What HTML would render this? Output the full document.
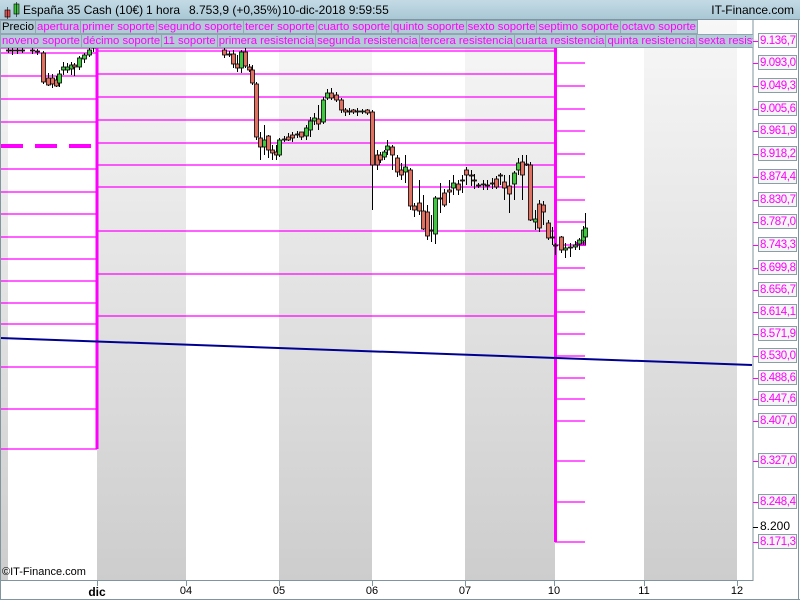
<!DOCTYPE html>
<html><head><meta charset="utf-8"><style>
body{margin:0;width:800px;height:600px;overflow:hidden;background:#fff;font-family:"Liberation Sans",sans-serif;position:relative}
#hdr{position:absolute;left:0;top:0;width:800px;height:20px;background:linear-gradient(#c4dbe5,#a9c7d5);border-bottom:1px solid #7f959f;box-sizing:border-box}
#hdr .t{position:absolute;top:3px;font-size:12px;line-height:14px;color:#000;white-space:pre}
#hdr .r{position:absolute;right:6px;top:3px;font-size:12px;line-height:14px}
.lg{position:absolute;height:14px;font-size:11.3px;line-height:14px;display:flex}
.lg span{background:#b3cbd6;border:1px solid #90a7b2;border-left:none;color:#ff00ff;padding:0 1px;white-space:nowrap;box-sizing:border-box;height:14px;line-height:12px}
.lg span:first-child{border-left:1px solid #90a7b2}
.ax{position:absolute;left:758px;width:39px;height:15px;border:1px solid #8a9ea8;background:#f5f5f5;color:#ff00ff;font-size:11.5px;letter-spacing:-0.4px;line-height:14px;box-sizing:border-box;padding-left:1px;overflow:hidden;white-space:nowrap}
.tk{position:absolute;left:753px;width:5px;height:1px;background:#ff00ff}
.dl{position:absolute;top:585px;font-size:11px;transform:translateX(-50%)}
</style></head><body>
<svg width="800" height="600" style="position:absolute;left:0;top:0">
<defs><linearGradient id="g" x1="0" y1="0" x2="0" y2="1"><stop offset="0" stop-color="#f7f7f7"/><stop offset="1" stop-color="#cdcdcd"/></linearGradient></defs>
<rect x="0" y="20" width="8" height="560" fill="url(#g)"/>
<rect x="97" y="20" width="89" height="560" fill="url(#g)"/>
<rect x="279" y="20" width="93" height="560" fill="url(#g)"/>
<rect x="465" y="20" width="90" height="560" fill="url(#g)"/>
<rect x="644" y="20" width="93" height="560" fill="url(#g)"/>
<g stroke="#ff00ff" stroke-width="1.2" fill="none" id="lines"></g>
<g id="cd"></g>
<line x1="0" y1="338" x2="752" y2="365" stroke="#000090" stroke-width="2"/>
<line x1="753" y1="20" x2="753" y2="581" stroke="#7f959f"/>
<line x1="0" y1="580.5" x2="753" y2="580.5" stroke="#7f959f"/>
<line x1="0.5" y1="20" x2="0.5" y2="600" stroke="#7f959f"/>
<line x1="798.5" y1="20" x2="798.5" y2="600" stroke="#7f959f"/>
<line x1="0" y1="599.5" x2="800" y2="599.5" stroke="#7f959f"/>
<g stroke="#7f959f" id="ticks"></g>
</svg>
<div id="hdr"><svg width="20" height="20" style="position:absolute;left:3px;top:1px"><rect x="2" y="9" width="5" height="7" fill="#e05050" stroke="#000" stroke-width=".6"/><line x1="4.5" y1="6" x2="4.5" y2="18" stroke="#000" stroke-width=".6"/><rect x="11" y="3" width="5" height="10" fill="#40c040" stroke="#000" stroke-width=".6"/><line x1="13.5" y1="1" x2="13.5" y2="16" stroke="#000" stroke-width=".6"/></svg><div class="t" style="left:23px">España 35 Cash (10€)</div><div class="t" style="left:146px">1 hora</div><div class="t" style="left:189px">8.753,9 (+0,35%)</div><div class="t" style="left:282px">10-dic-2018 9:59:55</div><div class="r">IT-Finance.com</div></div>
<div class="lg" style="left:0;top:20px"><span style="color:#000">Precio</span><span>apertura</span><span>primer soporte</span><span>segundo soporte</span><span>tercer soporte</span><span>cuarto soporte</span><span>quinto soporte</span><span>sexto soporte</span><span>septimo soporte</span><span>octavo soporte</span></div>
<div class="lg" style="left:0;top:34px;width:753px;overflow:hidden"><span>noveno soporte</span><span>décimo soporte</span><span>11 soporte</span><span>primera resistencia</span><span>segunda resistencia</span><span>tercera resistencia</span><span>cuarta resistencia</span><span>quinta resistencia</span><span>sexta resistencia</span></div>
<div style="position:absolute;left:2px;top:566px;font-size:11px">©IT-Finance.com</div>
<div class="dl" style="left:97px;font-weight:bold;font-size:12px">dic</div>
<div class="dl" style="left:186px">04</div><div class="dl" style="left:279px">05</div><div class="dl" style="left:372px">06</div><div class="dl" style="left:465px">07</div><div class="dl" style="left:554px">10</div><div class="dl" style="left:644px">11</div><div class="dl" style="left:737px">12</div>
<div style="position:absolute;left:760px;top:519px;font-size:12px">8.200</div><div class="tk" style="top:527px;background:#000"></div>
<div id="axl"></div>
<script>
var NS="http://www.w3.org/2000/svg";
function el(p,t,a){var e=document.createElementNS(NS,t);for(var k in a)e.setAttribute(k,a[k]);p.appendChild(e);return e;}
var L=document.getElementById('lines');
[53,76,99,122,169,192,214,237,259,281,303,324,367,409,449].forEach(function(y){el(L,'line',{x1:0,x2:97,y1:y,y2:y});});
el(L,'line',{x1:1,x2:92,y1:146,y2:146,'stroke-width':4,'stroke-dasharray':'22 12'});
[51,74,97,120,143,165,187,231,274,316].forEach(function(y){el(L,'line',{x1:97,x2:555,y1:y,y2:y});});
el(L,'line',{x1:0,x2:555,y1:48,y2:48});
var ax=[[41,"9.136,7"],[63,"9.093,0"],[86,"9.049,3"],[109,"9.005,6"],[131,"8.961,9"],[154,"8.918,2"],[177,"8.874,4"],[200,"8.830,7"],[222,"8.787,0"],[245,"8.743,3"],[268,"8.699,8"],[290,"8.656,7"],[312,"8.614,1"],[334,"8.571,9"],[356,"8.530,0"],[378,"8.488,6"],[399,"8.447,6"],[421,"8.407,0"],[461,"8.327,0"],[502,"8.248,4"],[542,"8.171,3"]];
var h="";ax.forEach(function(a){if(a[0]>48)el(L,'line',{x1:555,x2:585,y1:a[0],y2:a[0]});h+='<div class="tk" style="top:'+a[0]+'px"></div><div class="ax" style="top:'+(a[0]-8)+'px">'+a[1]+'</div>';});
document.getElementById('axl').innerHTML=h;
el(L,'line',{x1:97,x2:97,y1:48,y2:449,'stroke-width':3});
el(L,'line',{x1:555.5,x2:555.5,y1:48,y2:542,'stroke-width':3});
el(L,'line',{x1:576,x2:586,y1:244,y2:244,'stroke-width':4});
var C=document.getElementById('cd');
var d=[[8,50,51,47,53],[12,50,51,48,55],[17,50,51,47,54],[22,51,50,48,53],[32,50,51,48,54],[37,51,52,49,55],[43,53,82,51,84],[48,78,85,73,86],[52,78,84,74,88],[56,80,86,76,87],[59,83,74,70,87],[63,70,67,62,75],[67,70,67,63,73],[71,69,65,62,75],[74,65,67,63,76],[79,67,58,56,70],[84,59,55,53,63],[89,55,50,48,57],[93,48,46,44,52],
[224,50,55,47,58],[229,54,55,51,57],[233,54,64,50,68],[237,64,68,55,72],[241,68,52,50,73],[245,52,66,48,68],[249,67,70,64,72],[252,70,83,65,85],[256,84,137,82,140],[260,138,147,132,160],[264,147,140,125,155],[268,136,150,135,158],[272,150,153,145,160],[276,152,155,145,160],[279,155,140,138,157],[284,139,139,136,142],[288,137,140,133,141],[292,135,138,132,142],[297,134,134,131,138],[301,132,137,132,140],[306,136,128,125,140],[310,130,121,117,137],[314,121,118,113,125],[318,119,124,105,130],[323,122,100,97,124],[327,98,93,89,100],[331,93,98,88,100],[336,95,100,92,102],[341,100,110,98,113],[345,110,112,108,116],[349,111,112,108,115],[353,110,112,109,114],[357,111,112,108,116],[362,112,111,109,114],[367,110,113,109,115],[372,112,165,110,210],[377,155,165,150,170],[380,155,160,152,163],[384,157,152,150,160],[387,150,146,140,155],[392,147,155,145,170],[397,158,172,155,177],[401,170,175,163,180],[405,172,167,155,183],[410,170,206,168,210],[414,206,210,203,217],[419,203,211,180,215],[423,211,229,195,230],[427,212,236,205,240],[431,230,231,215,242],[435,234,198,196,244],[440,198,198,183,213],[444,193,205,189,207],[449,190,192,180,203],[453,188,183,175,195],[458,184,190,180,195],[462,180,180,175,193],[466,170,175,167,185],[471,175,176,170,186],[474,180,180,174,189],[478,185,185,183,188],[483,184,185,180,190],[487,185,185,180,190],[492,183,184,178,189],[496,179,187,176,189],[500,175,176,173,185],[504,182,188,175,200],[509,186,194,175,213],[514,184,173,171,200],[518,170,163,158,175],[522,162,175,155,200],[526,164,165,155,166],[530,165,220,162,221],[535,222,219,210,230],[539,204,228,200,232],[543,205,212,201,225],[548,223,238,220,240],[552,237,238,227,245],[555,245,245,243,255],[561,237,250,236,253],[565,250,248,243,258],[570,247,248,243,257],[575,247,245,241,250],[579,244,240,238,250],[583,241,230,226,245],[585,237,228,213,245]];
d.forEach(function(c){var x=c[0],o=c[1],cl=c[2];el(C,'line',{x1:x+.5,x2:x+.5,y1:c[3],y2:c[4],stroke:'#000','stroke-width':1});var t=Math.min(o,cl),b=Math.max(o,cl);el(C,'rect',{x:x-1.5,y:t,width:4,height:Math.max(b-t,1),fill:cl<o?'#40c840':'#e07060',stroke:'#000','stroke-width':.8});});
var T=document.getElementById('ticks');[97,186,279,372,465,554,644,737].forEach(function(x){el(T,'line',{x1:x+.5,x2:x+.5,y1:580,y2:586});});
</script>
</body></html>
